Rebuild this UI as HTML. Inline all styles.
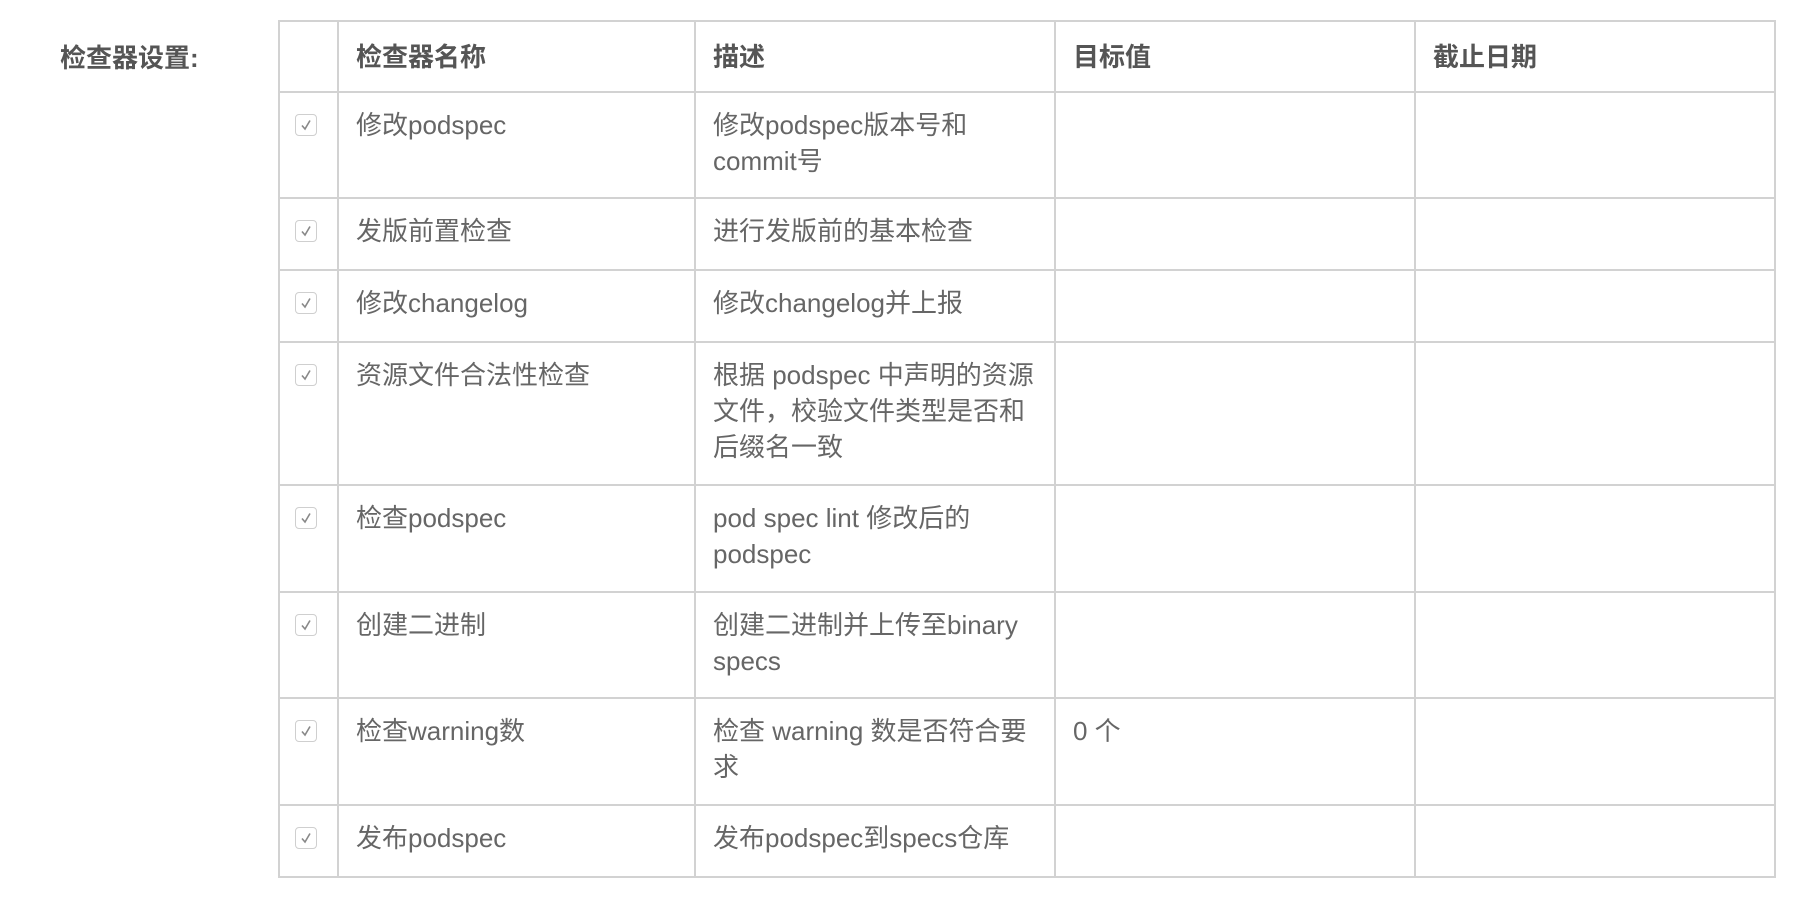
<!DOCTYPE html>
<html><head><meta charset="utf-8"><style>
html,body{margin:0;padding:0;background:#fff;width:1810px;height:904px;overflow:hidden}
body{font-family:"Liberation Sans","Noto Sans CJK SC",sans-serif;color:#666;font-size:26px}
.label{position:absolute;left:60px;top:38px;font-weight:bold;color:#555;font-size:26px}
table{position:absolute;left:278px;top:20px;border-collapse:collapse;table-layout:fixed}
td,th{border:2px solid #d2d2d2;vertical-align:top;padding:0 0 0 17px;line-height:36px;text-align:left}
th{font-weight:bold;color:#555;vertical-align:middle}
td{padding-top:14px}
td.cb{padding:0;text-align:center;padding-top:15px}
.box{display:inline-block;width:22px;height:22px;border:1.5px solid #cfcfcf;border-radius:4px;position:relative;box-sizing:border-box;margin-top:6px;margin-left:-6px}
.box svg{position:absolute;left:2px;top:2px}
</style></head><body>
<div class="label">检查器设置:</div>
<table>
<colgroup><col style="width:59px"><col style="width:357px"><col style="width:360px"><col style="width:360px"><col style="width:360px"></colgroup>
<tr style="height:71px"><th></th><th>检查器名称</th><th>描述</th><th>目标值</th><th>截止日期</th></tr>
<tr style="height:106px"><td class="cb"><span class="box"><svg width="16" height="16" viewBox="0 0 16 16"><path d="M4 8.5 L7 12 L12 3.5" stroke="#888" stroke-width="1.6" fill="none"/></svg></span></td><td>修改podspec</td><td>修改podspec版本号和<br>commit号</td><td></td><td></td></tr>
<tr style="height:72px"><td class="cb"><span class="box"><svg width="16" height="16" viewBox="0 0 16 16"><path d="M4 8.5 L7 12 L12 3.5" stroke="#888" stroke-width="1.6" fill="none"/></svg></span></td><td>发版前置检查</td><td>进行发版前的基本检查</td><td></td><td></td></tr>
<tr style="height:72px"><td class="cb"><span class="box"><svg width="16" height="16" viewBox="0 0 16 16"><path d="M4 8.5 L7 12 L12 3.5" stroke="#888" stroke-width="1.6" fill="none"/></svg></span></td><td>修改changelog</td><td>修改changelog并上报</td><td></td><td></td></tr>
<tr style="height:143px"><td class="cb"><span class="box"><svg width="16" height="16" viewBox="0 0 16 16"><path d="M4 8.5 L7 12 L12 3.5" stroke="#888" stroke-width="1.6" fill="none"/></svg></span></td><td>资源文件合法性检查</td><td>根据 podspec 中声明的资源<br>文件，校验文件类型是否和<br>后缀名一致</td><td></td><td></td></tr>
<tr style="height:107px"><td class="cb"><span class="box"><svg width="16" height="16" viewBox="0 0 16 16"><path d="M4 8.5 L7 12 L12 3.5" stroke="#888" stroke-width="1.6" fill="none"/></svg></span></td><td>检查podspec</td><td>pod spec lint 修改后的<br>podspec</td><td></td><td></td></tr>
<tr style="height:106px"><td class="cb"><span class="box"><svg width="16" height="16" viewBox="0 0 16 16"><path d="M4 8.5 L7 12 L12 3.5" stroke="#888" stroke-width="1.6" fill="none"/></svg></span></td><td>创建二进制</td><td>创建二进制并上传至binary<br>specs</td><td></td><td></td></tr>
<tr style="height:107px"><td class="cb"><span class="box"><svg width="16" height="16" viewBox="0 0 16 16"><path d="M4 8.5 L7 12 L12 3.5" stroke="#888" stroke-width="1.6" fill="none"/></svg></span></td><td>检查warning数</td><td>检查 warning 数是否符合要<br>求</td><td>0 个</td><td></td></tr>
<tr style="height:72px"><td class="cb"><span class="box"><svg width="16" height="16" viewBox="0 0 16 16"><path d="M4 8.5 L7 12 L12 3.5" stroke="#888" stroke-width="1.6" fill="none"/></svg></span></td><td>发布podspec</td><td>发布podspec到specs仓库</td><td></td><td></td></tr>
</table>
</body></html>
